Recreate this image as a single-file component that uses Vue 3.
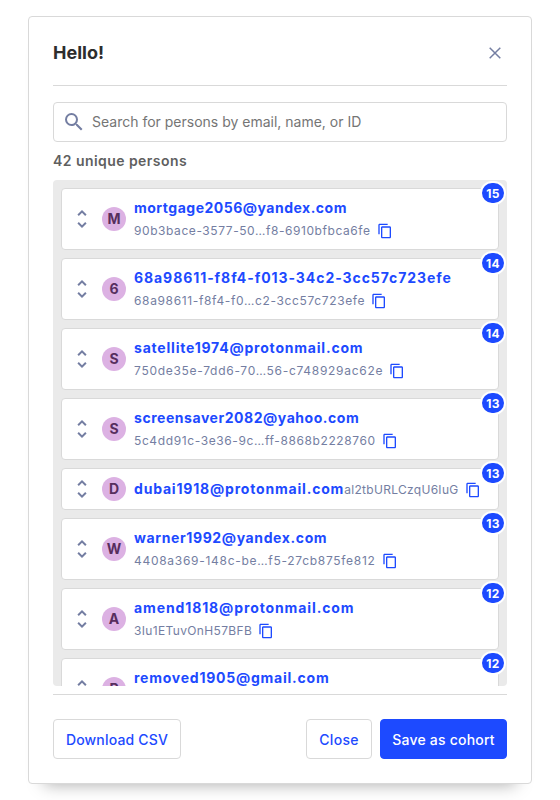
<script setup>
// nameTrack / idTrack: letter spacing of each text, in pixels
const people = [
  { name: 'mortgage2056@yandex.com', id: '90b3bace-3577-50…f8-6910bfbca6fe', count: 15, nameTrack: 0.5, idTrack: 0.57 },
  { name: '68a98611-f8f4-f013-34c2-3cc57c723efe', id: '68a98611-f8f4-f0…c2-3cc57c723efe', count: 14, nameTrack: 0.93, idTrack: 0.64 },
  { name: 'satellite1974@protonmail.com', id: '750de35e-7dd6-70…56-c748929ac62e', count: 14, nameTrack: 0.79, idTrack: 0.71 },
  { name: 'screensaver2082@yahoo.com', id: '5c4dd91c-3e36-9c…ff-8868b2228760', count: 13, nameTrack: 0.54, idTrack: 0.61 },
  { name: 'dubai1918@protonmail.com', id: 'al2tbURLCzqU6IuG', count: 13, inline: true, nameTrack: 0.81, idTrack: 0.3 },
  { name: 'warner1992@yandex.com', id: '4408a369-148c-be…f5-27cb875fe812', count: 13, nameTrack: 0.62, idTrack: 0.71 },
  { name: 'amend1818@protonmail.com', id: '3Iu1ETuvOnH57BFB', count: 12, nameTrack: 0.89, idTrack: 0.35 },
  { name: 'removed1905@gmail.com', id: '7c1e90ab-52d4-41…a3-90be12f7d6c8', count: 12, nameTrack: 0.76, idTrack: 0.6 },
]
</script>

<template>
  <div class="modal">
    <header class="header">
      <h3 class="title">Hello!</h3>
      <button class="close" aria-label="Close">
        <svg width="16" height="16" viewBox="0 0 16 16" fill="none" stroke="currentColor" stroke-width="1.5">
          <path d="M2.7 2.7l10.6 10.6M13.3 2.7L2.7 13.3" />
        </svg>
      </button>
    </header>
    <div class="search">
      <svg width="24" height="24" viewBox="0 0 24 24" fill="currentColor">
        <path d="M15.5 14h-.79l-.28-.27A6.471 6.471 0 0 0 16 9.5 6.5 6.5 0 1 0 9.5 16c1.61 0 3.09-.59 4.23-1.57l.27.28v.79l5 4.99L20.49 19l-4.99-5zm-6 0C7.01 14 5 11.99 5 9.5S7.01 5 9.5 5 14 7.01 14 9.5 11.99 14 9.5 14z" />
      </svg>
      <input type="text" placeholder="Search for persons by email, name, or ID" />
    </div>
    <div class="total">42 unique persons</div>
    <div class="list">
      <div v-for="p in people" :key="p.name" class="row" :class="{ inline: p.inline }">
        <svg class="expand" width="24" height="24" viewBox="0 0 24 24" fill="currentColor">
          <path d="M12 5.83 15.17 9l1.41-1.41L12 3 7.41 7.59 8.83 9 12 5.83zm0 12.34L8.83 15l-1.41 1.41L12 21l4.59-4.59L15.17 15 12 18.17z" />
        </svg>
        <span class="avatar">{{ p.name[0].toUpperCase() }}</span>
        <div class="info">
          <a class="name" :style="{ letterSpacing: p.nameTrack + 'px' }">{{ p.name }}</a>
          <div class="id">
            <span class="code" :style="{ letterSpacing: p.idTrack + 'px' }">{{ p.id }}</span>
            <svg width="16" height="16" viewBox="0 0 24 24" fill="currentColor">
              <path d="M16 1H4c-1.1 0-2 .9-2 2v14h2V3h12V1zm3 4H8c-1.1 0-2 .9-2 2v14c0 1.1.9 2 2 2h11c1.1 0 2-.9 2-2V7c0-1.1-.9-2-2-2zm0 16H8V7h11v14z" />
            </svg>
          </div>
        </div>
        <span class="badge">{{ p.count }}</span>
      </div>
    </div>
    <footer class="footer">
      <button class="btn download">Download CSV</button>
      <div class="actions">
        <button class="btn">Close</button>
        <button class="btn primary">Save as cohort</button>
      </div>
    </footer>
  </div>
</template>

<style>
body {
  background: #fff;
}
</style>

<style scoped>
* {
  box-sizing: border-box;
}
.modal {
  display: flex;
  flex-direction: column;
  width: 504px;
  height: 768px;
  margin: 16px 28px;
  padding: 0 24px;
  border: 1px solid #d9d9d9;
  border-radius: 4px;
  background: #fff;
  box-shadow: 0 16px 16px -16px rgba(0, 0, 0, 0.35);
  font-family: Inter, 'Liberation Sans', sans-serif;
  font-size: 14px;
  color: #2d2d2d;
}
.header {
  display: flex;
  flex: none;
  align-items: center;
  justify-content: space-between;
  height: 69px;
  padding-top: 3px;
  border-bottom: 1px solid #d9d9d9;
}
.title {
  margin: 0;
  font-size: 18px;
  line-height: 24px;
  font-weight: 700;
}
.close {
  display: flex;
  padding: 4px;
  border: 0;
  background: none;
  color: #747ea2;
}
.search {
  display: flex;
  flex: none;
  align-items: center;
  height: 40px;
  margin-top: 16px;
  padding: 0 8px;
  border: 1px solid #d9d9d9;
  border-radius: 4px;
  color: #747ea2;
}
.search input {
  flex: 1;
  margin-left: 6px;
  padding: 0;
  border: 0;
  outline: 0;
  background: none;
  font: 14px/20px Inter, 'Liberation Sans', sans-serif;
}
.search input::placeholder {
  color: #757575;
}
.total {
  flex: none;
  height: 22px;
  margin: 8px 0;
  line-height: 22px;
  font-weight: 600;
  letter-spacing: 0.44px;
  color: #5f5f5f;
}
.list {
  display: flex;
  flex: none;
  flex-direction: column;
  gap: 8px;
  height: 506px;
  padding: 8px;
  overflow: hidden;
  border-radius: 4px;
  background: #eaeaea;
}
.row {
  position: relative;
  display: flex;
  flex: none;
  align-items: center;
  height: 62px;
  padding-left: 8px;
  border: 1px solid #d9d9d9;
  border-radius: 4px;
  background: #fff;
}
.row.inline {
  height: 42px;
}
.expand {
  flex: none;
  color: #747ea2;
}
.avatar {
  display: flex;
  flex: none;
  align-items: center;
  justify-content: center;
  width: 24px;
  height: 24px;
  margin: 0 8px;
  padding-bottom: 1px;
  border-radius: 50%;
  background: #dcb1e3;
  color: #572e5e;
  font-weight: 700;
}
.info {
  display: flex;
  flex-direction: column;
  padding-top: 2px;
  white-space: nowrap;
}
.name {
  line-height: 22px;
  font-weight: 700;
  color: #1d4aff;
}
.id {
  display: flex;
  align-items: center;
  gap: 6px;
  height: 24px;
  font-size: 12px;
  color: #747ea2;
}
.code {
  padding-bottom: 2px;
}
.id svg {
  color: #1d4aff;
}
.inline .info {
  flex-direction: row;
  align-items: center;
  padding-top: 2px;
}
.inline .name {
  padding-bottom: 2px;
}
.badge {
  position: absolute;
  top: -8px;
  right: -8px;
  display: flex;
  align-items: center;
  justify-content: center;
  min-width: 26px;
  height: 24px;
  border: 2px solid #fff;
  border-radius: 12px;
  background: #1d4aff;
  color: #fff;
  font-size: 12px;
  font-weight: 700;
  letter-spacing: 0.3px;
}
.footer {
  display: flex;
  flex: none;
  justify-content: space-between;
  margin-top: 8px;
  padding-top: 24px;
  border-top: 1px solid #d9d9d9;
}
.actions {
  display: flex;
  gap: 8px;
}
.btn {
  width: 66px;
  height: 40px;
  padding: 1px 0 0;
  border: 1px solid #d9d9d9;
  border-radius: 4px;
  background: #fff;
  color: #1d4aff;
  font: 500 14px/20px Inter, 'Liberation Sans', sans-serif;
  letter-spacing: 0.3px;
  white-space: nowrap;
}
.btn.download {
  width: 128px;
  letter-spacing: 0.18px;
}
.btn.primary {
  width: 127px;
  border-color: #1d4aff;
  background: #1d4aff;
  color: #fff;
  letter-spacing: 0.22px;
}
</style>
